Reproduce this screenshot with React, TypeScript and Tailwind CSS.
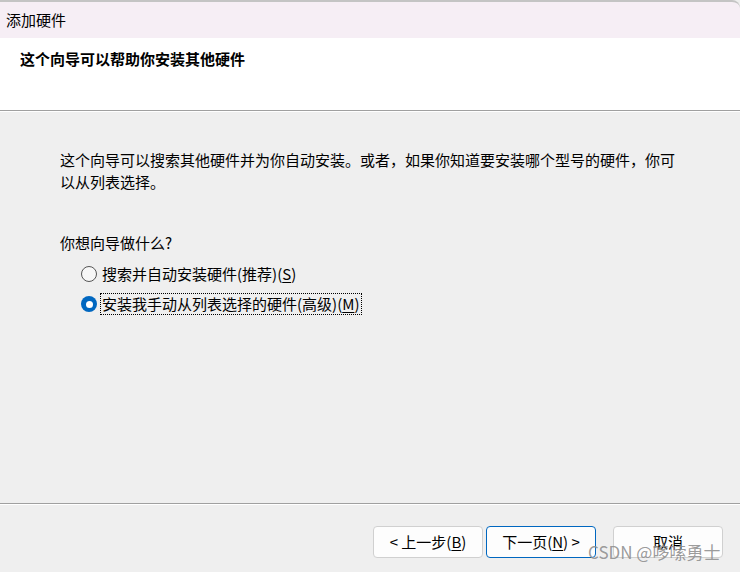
import { useState } from "react";

const font = { fontFamily: '"Noto Sans CJK SC", "Microsoft YaHei", sans-serif' };

interface OptionProps {
  label: string;
  accel: string;
  checked: boolean;
  focused?: boolean;
  onSelect: () => void;
}

// 单选项
const RadioOption = ({ label, accel, checked, focused, onSelect }: OptionProps) => (
  <button type="button" onClick={onSelect} className="flex h-[30px] items-center text-left">
    {checked ? (
      <span className="flex h-4 w-4 items-center justify-center rounded-full bg-[#0067c0]">
        <span className="h-[7px] w-[7px] rounded-full bg-white" />
      </span>
    ) : (
      <span className="h-4 w-4 rounded-full border border-[#555] bg-[#f7f7f7]" />
    )}
    <span
      className={`ml-[4px] px-[1px] leading-[20px] ${
        focused ? "outline outline-1 outline-dotted outline-black" : ""
      }`}
    >
      {label}(<span className="underline underline-offset-2">{accel}</span>)
    </span>
  </button>
);

const WizardButton = ({ children, primary }: { children: React.ReactNode; primary?: boolean }) => (
  <button
    type="button"
    className={`h-[32px] w-[110px] rounded-[4px] border bg-[#fdfdfd] text-[15px] text-black ${
      primary ? "border-[#0067c0]" : "border-[#d0d0d0]"
    }`}
  >
    {children}
  </button>
);

export default function App() {
  const [mode, setMode] = useState<"auto" | "manual">("manual");

  return (
    <div className="relative h-[572px] w-[740px] overflow-hidden bg-[#efefef] text-[15px] text-black" style={font}>
      {/* 标题栏 */}
      <div className="h-[38px] rounded-tr-[8px] border-t-2 border-[#c4c4c4] bg-[#f6eef5] pl-[6px] leading-[36px]">
        添加硬件
      </div>

      {/* 页眉 */}
      <div className="h-[73px] border-b border-[#a0a0a0] bg-white pl-[20px] pt-[10px]">
        <h1 className="font-bold leading-[22px]">这个向导可以帮助你安装其他硬件</h1>
      </div>

      {/* 内容 */}
      <div className="h-[393px] border-t border-white border-b border-b-[#a0a0a0] pl-[60px] pt-[37px]">
        <p className="w-[622px] leading-[22px]">
          这个向导可以搜索其他硬件并为你自动安装。或者，如果你知道要安装哪个型号的硬件，你可以从列表选择。
        </p>
        <p className="mt-[38px] leading-[23px]">你想向导做什么?</p>
        <div className="mt-[5px] flex flex-col items-start pl-[21px]">
          <RadioOption
            label="搜索并自动安装硬件(推荐)"
            accel="S"
            checked={mode === "auto"}
            focused={mode === "auto"}
            onSelect={() => setMode("auto")}
          />
          <RadioOption
            label="安装我手动从列表选择的硬件(高级)"
            accel="M"
            checked={mode === "manual"}
            focused={mode === "manual"}
            onSelect={() => setMode("manual")}
          />
        </div>
      </div>

      {/* 底部按钮 */}
      <div className="flex border-t border-white pl-[373px] pt-[21px]">
        <WizardButton>
          &lt; 上一步(<span className="underline underline-offset-2">B</span>)
        </WizardButton>
        <div className="ml-[3px]">
          <WizardButton primary>
            下一页(<span className="underline underline-offset-2">N</span>) &gt;
          </WizardButton>
        </div>
        <div className="ml-[17px]">
          <WizardButton>取消</WizardButton>
        </div>
      </div>

      {/* 水印 */}
      <div className="absolute left-[588px] top-[541px] text-[17px] leading-[22px] text-[#8f8f8f]/90">
        CSDN @哆嗦勇士
      </div>
    </div>
  );
}
